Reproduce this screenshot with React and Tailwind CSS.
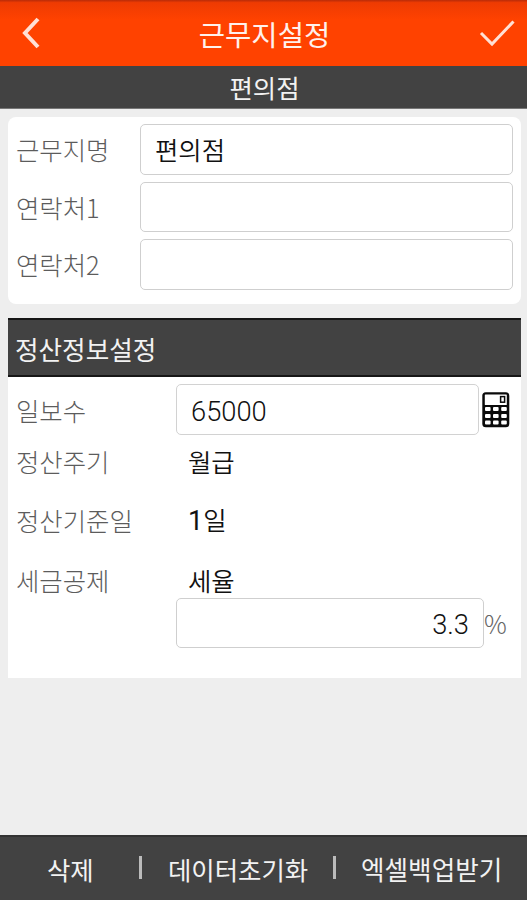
const contactFields = [
  { label: '근무지명', value: '편의점' },
  { label: '연락처1', value: '' },
  { label: '연락처2', value: '' },
];

const CalculatorIcon = () => (
  <svg width="28" height="36" viewBox="0 0 28 36" fill="none">
    <rect x="0.3" y="0.2" width="27" height="35" rx="3.5" fill="#0a0a0a" />
    <rect x="2.8" y="2.5" width="22" height="10.4" rx="0.5" fill="#fff" />
    <rect x="18.6" y="4.6" width="4" height="5.6" stroke="#0a0a0a" strokeWidth="1.5" />
    {[15.1, 21.9, 28.6].map((y) =>
      [3, 11, 19.2].map((x) => (
        <rect key={`${x}-${y}`} x={x} y={y} width="5.6" height="4" rx="1" fill="#fff" />
      ))
    )}
  </svg>
);

const Label = ({ children }) => (
  <span className="whitespace-nowrap font-light text-[#5c5c5c]">{children}</span>
);

const App = () => {
  return (
    <div className="flex h-[900px] w-[527px] flex-col overflow-hidden bg-[#eee] font-['Noto_Sans_CJK_KR',sans-serif] text-[25.4px] leading-9">
      {/* Title bar */}
      <header className="flex h-[66px] shrink-0 items-center justify-between bg-[#ff4200] bg-linear-to-b from-[#b92c08] from-0% via-[#ee3b02] via-4% to-[#ff4200] to-30% pr-3 pl-[21px]">
        <svg width="20" height="32" viewBox="0 0 20 32" fill="none" stroke="#ffe0d5" strokeWidth="4">
          <path d="M17 2 L4 16 L17 30" />
        </svg>
        <h1 className="pt-px pl-[9px] text-[28.6px] font-normal text-[#fff1ec]">근무지설정</h1>
        <svg width="36" height="28" viewBox="0 0 36 28" fill="none" stroke="#ffe0d5" strokeWidth="3">
          <path d="M2 14 L13 25 L34.5 2.5" />
        </svg>
      </header>

      <div className="flex h-[43px] shrink-0 items-center justify-center border-b border-[#777] bg-[#424242] pl-0.5 text-[#f2f2f2]">
        편의점
      </div>

      {/* Contact info */}
      <section className="mr-[6px] ml-2 mt-2 flex h-[187px] shrink-0 flex-col gap-[7px] rounded-lg bg-white pt-[7px] pr-2 pl-2">
        {contactFields.map((field) => (
          <div key={field.label} className="flex h-[50.5px] items-center">
            <div className="w-[124px]">
              <Label>{field.label}</Label>
            </div>
            <div className="flex h-full flex-1 items-center rounded-[5px] border-[1.5px] border-[#cfcfcf] pl-[14px] font-[350] text-[#111]">
              {field.value}
            </div>
          </div>
        ))}
      </section>

      {/* Settlement settings */}
      <section className="mr-[6px] ml-2 mt-[14px] flex h-[360px] shrink-0 flex-col bg-white">
        <h2 className="flex h-[59px] items-center border-y-2 border-[#161616] bg-[#424242] pt-[3px] pl-[7px] text-[25.6px] font-normal text-[#f2f2f2]">
          정산정보설정
        </h2>
        <div className="mt-[7px] flex h-[51px] items-center pl-2">
          <div className="w-[160px]">
            <Label>일보수</Label>
          </div>
          <div className="flex h-full w-[303px] items-center rounded-[5px] border-[1.5px] border-[#d2d2d2] pt-[4px] pl-[14px] font-[Roboto,sans-serif] text-[27.3px] font-light text-[#111]">
            65000
          </div>
          <div className="ml-[3px]">
            <CalculatorIcon />
          </div>
        </div>
        <div className="mt-[8px] flex h-9 items-center pl-2">
          <div className="w-[172px]">
            <Label>정산주기</Label>
          </div>
          <span className="font-[350] text-[#111]">월급</span>
        </div>
        <div className="mt-[23px] flex h-9 items-center pl-2">
          <div className="w-[172px]">
            <Label>정산기준일</Label>
          </div>
          <span className="font-[350] text-[#111]">
            <span className="font-[Roboto,sans-serif] text-[27px] font-normal">1</span>일
          </span>
        </div>
        <div className="mt-[24px] flex h-9 items-center pl-2">
          <div className="w-[172px]">
            <Label>세금공제</Label>
          </div>
          <span className="font-[350] text-[#111]">세율</span>
        </div>
        <div className="flex h-[50px] items-center pl-[168px] font-[Roboto,sans-serif] text-[27.3px] font-light">
          <div className="flex h-full w-[308px] items-center justify-end rounded-[5px] border-[1.5px] border-[#cfcfcf] pt-[4px] pr-[14px] text-[#111]">
            3.3
          </div>
          <span className="font-['Noto_Sans_CJK_KR',sans-serif] text-[25.4px] text-[#666]">%</span>
        </div>
      </section>

      {/* Bottom actions */}
      <footer className="mt-auto flex h-[65px] shrink-0 items-center border-t-2 border-[#333] bg-[#424242] text-[#f2f2f2] pl-[47px]">
        <span className="w-[92px]">삭제</span>
        <span className="mb-0.5 h-[23px] w-[3px] bg-[#bbb]" />
        <span className="ml-[26px] w-[165px] whitespace-nowrap">데이터초기화</span>
        <span className="mb-0.5 h-[23px] w-[3px] bg-[#bbb]" />
        <span className="ml-[25px] whitespace-nowrap text-[25.6px]">엑셀백업받기</span>
      </footer>
    </div>
  );
};

export default App;
